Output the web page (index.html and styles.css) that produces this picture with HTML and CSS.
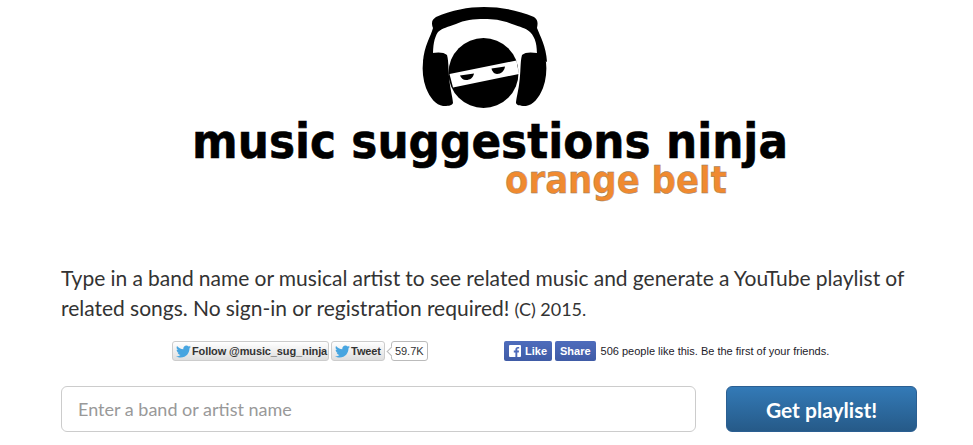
FILE: index.html
```html
<!DOCTYPE html>
<html lang="en">
<head>
    <meta charset="UTF-8">
    <meta name="viewport" content="width=device-width, initial-scale=1.0">
    <title>Music Suggestions Ninja</title>
    <link rel="stylesheet" href="styles.css">
</head>

<body>
    <main class="container">
        <svg class="logo" viewBox="89 0 800 205" width="800" height="205" role="img" aria-label="Music Suggestions Ninja, orange belt">
            <g transform="translate(400 0)">
                <!-- headband -->
                <path d="M23 62 C24 46 31 36 33 28 C31 22 32 20 36 17 C52 10 68 7 84 7 C100 7 118 10 134 17 C138 20 138 23 137 28 C140 36 146 46 147 62 L137 56 C137 46 136 38 130 32 C126 28 120 27 112 24 C102 20 94 19 84 19 C74 19 64 20 56 24 C48 27 42 28 38 32 C34 38 33 46 33 56 Z" fill="#000"/>
                <!-- ear cups -->
                <path d="M32 53 C38 52 44 52 47 55 C49 62 48 72 50 85 C51 92 53 100 53 103 C52 106 47 106 43 106 C36 105 30 98 26 88 C23 80 22 70 23 62 C24 56 27 53 32 53 Z" fill="#000"/>
                <path d="M137 53 C131 52 125 52 122 55 C120 62 121 72 119 85 C118 92 116 100 116 103 C117 106 122 106 126 106 C133 105 139 98 143 88 C146 80 147 70 146 62 C145 56 142 53 137 53 Z" fill="#000"/>
                <!-- head -->
                <circle cx="83.5" cy="73" r="35" fill="#000"/>
                <path d="M49.5 74 L116.5 60.5 L119 74 L53 87.5 Z" fill="#fff"/>
                <path d="M60 75.5 L74 73.5 C73 78 70 80 66 80 C63 80 61 78 60 75.5 Z" fill="#000"/>
                <path d="M91.5 68.5 L105 66.5 C104.5 71 101 74 97 74 C94 74 92 71 91.5 68.5 Z" fill="#000"/>
            </g>
            <text class="logo-name" x="192" y="158" textLength="596" lengthAdjust="spacingAndGlyphs">music suggestions ninja</text>
            <text class="logo-belt" x="505" y="193" textLength="222" lengthAdjust="spacingAndGlyphs">orange belt</text>
        </svg>

        <p class="intro">Type in a band name or musical artist to see related music and generate a YouTube playlist of related songs. No sign-in or registration required! <small>(C) 2015.</small></p>

        <div class="social">
            <div class="twitter">
                <a class="tw-btn" href="#">
                    <svg class="bird" viewBox="0 0 24 24"><path d="M23.954 4.569c-.885.389-1.83.654-2.825.775 1.014-.611 1.794-1.574 2.163-2.723-.951.555-2.005.959-3.127 1.184-.896-.959-2.173-1.559-3.591-1.559-2.717 0-4.92 2.203-4.92 4.917 0 .39.045.765.127 1.124C7.691 8.094 4.066 6.13 1.64 3.161c-.427.722-.666 1.561-.666 2.475 0 1.71.87 3.213 2.188 4.096-.807-.026-1.566-.248-2.228-.616v.061c0 2.385 1.693 4.374 3.946 4.827-.413.111-.849.171-1.296.171-.314 0-.615-.03-.916-.086.631 1.953 2.445 3.377 4.604 3.417-1.68 1.319-3.809 2.105-6.102 2.105-.39 0-.779-.023-1.17-.067 2.189 1.394 4.768 2.209 7.557 2.209 9.054 0 13.999-7.496 13.999-13.986 0-.209 0-.42-.015-.63.961-.689 1.8-1.56 2.46-2.548l-.047-.02z"/></svg>
                    Follow @music_sug_ninja
                </a>
                <a class="tw-btn" href="#">
                    <svg class="bird" viewBox="0 0 24 24"><path d="M23.954 4.569c-.885.389-1.83.654-2.825.775 1.014-.611 1.794-1.574 2.163-2.723-.951.555-2.005.959-3.127 1.184-.896-.959-2.173-1.559-3.591-1.559-2.717 0-4.92 2.203-4.92 4.917 0 .39.045.765.127 1.124C7.691 8.094 4.066 6.13 1.64 3.161c-.427.722-.666 1.561-.666 2.475 0 1.71.87 3.213 2.188 4.096-.807-.026-1.566-.248-2.228-.616v.061c0 2.385 1.693 4.374 3.946 4.827-.413.111-.849.171-1.296.171-.314 0-.615-.03-.916-.086.631 1.953 2.445 3.377 4.604 3.417-1.68 1.319-3.809 2.105-6.102 2.105-.39 0-.779-.023-1.17-.067 2.189 1.394 4.768 2.209 7.557 2.209 9.054 0 13.999-7.496 13.999-13.986 0-.209 0-.42-.015-.63.961-.689 1.8-1.56 2.46-2.548l-.047-.02z"/></svg>
                    Tweet
                </a>
                <span class="tw-count">59.7K</span>
            </div>
            <div class="facebook">
                <a class="fb-btn" href="#">
                    <svg class="fb-icon" viewBox="0 0 12 12"><rect width="12" height="12" rx="1" fill="#fff"/><path d="M8.3 12V7.4h1.5l.2-1.8H8.3V4.5c0-.5.2-.9.9-.9h1V2c-.2 0-.8-.1-1.4-.1-1.4 0-2.4.9-2.4 2.4v1.3H4.8v1.8h1.6V12z" fill="#4c69ba"/></svg>
                    Like
                </a>
                <a class="fb-btn" href="#">Share</a>
                <span class="fb-text">506 people like this. Be the first of your friends.</span>
            </div>
        </div>

        <form class="search">
            <input class="search-input" type="text" placeholder="Enter a band or artist name">
            <button class="search-btn" type="submit">Get playlist!</button>
        </form>
    </main>
</body>
</html>
```

FILE: styles.css
```css
/* General Styles */
* {
    margin: 0;
    padding: 0;
    box-sizing: border-box;
}

html, body {
    height: 100%;
    background: #fff;
    color: #333;
    font-family: 'Lato', Arial, sans-serif;
    overflow: hidden;
}

.container {
    width: 856px;
    margin-left: 61px;
}

/* Logo */
.logo {
    display: block;
    margin: 0 auto;
}

.logo-name {
    font-family: 'DejaVu Sans', sans-serif;
    font-weight: bold;
    font-size: 48px;
    fill: #000;
    stroke: #000;
    stroke-width: 0.6px;
}

.logo-belt {
    font-family: 'DejaVu Sans', sans-serif;
    font-weight: bold;
    font-size: 38px;
    fill: #f08a30;
    stroke: #8a7a6a;
    stroke-width: 0.4px;
}

/* Intro */
.intro {
    margin-top: 58px;
    font-size: 21px;
    line-height: 30px;
    word-spacing: -0.2px;
}

.intro small {
    font-size: 18px;
}

/* Social buttons */
.social {
    display: flex;
    margin-top: 17px;
    padding-left: 111px;
    height: 20px;
}

.twitter {
    display: flex;
    width: 332px;
}

.tw-btn {
    display: flex;
    align-items: center;
    gap: 1px;
    height: 20px;
    margin-right: 2px;
    padding: 0 1px 0 3px;
    border: 1px solid #ccc;
    border-radius: 3px;
    background: linear-gradient(#fff, #dedede);
    color: #333;
    font: bold 11px 'Liberation Sans', Arial, sans-serif;
    letter-spacing: -0.12px;
    text-decoration: none;
    white-space: nowrap;
}

.tw-btn + .tw-btn {
    padding-right: 3px;
}

.bird {
    width: 15px;
    height: 15px;
    fill: #47a5e0;
}

.tw-count {
    position: relative;
    height: 20px;
    margin-left: 4px;
    padding: 0 3px;
    border: 1px solid #bbb;
    border-radius: 3px;
    background: #fff;
    color: #333;
    font: 11px/18px 'Liberation Sans', Arial, sans-serif;
}

.tw-count::before {
    content: "";
    position: absolute;
    left: -4px;
    top: 6px;
    width: 6px;
    height: 6px;
    border-left: 1px solid #bbb;
    border-bottom: 1px solid #bbb;
    background: #fff;
    transform: rotate(45deg);
}

.facebook {
    display: flex;
    align-items: center;
}

.fb-btn {
    display: flex;
    align-items: center;
    gap: 4px;
    height: 20px;
    margin-right: 3px;
    padding: 0 5px;
    border-radius: 2px;
    background: linear-gradient(#4e6cbc, #3f5ba6);
    color: #fff;
    font: bold 11px 'Liberation Sans', Arial, sans-serif;
    text-decoration: none;
}

.fb-text {
    margin-left: 2px;
    color: #1d2129;
    font: 11px 'Liberation Sans', Arial, sans-serif;
    white-space: nowrap;
}

.fb-icon {
    width: 12px;
    height: 12px;
}

/* Search form */
.search {
    display: flex;
    justify-content: space-between;
    margin-top: 25px;
}

.search-input {
    width: 635px;
    height: 46px;
    padding: 0 16px;
    border: 1px solid #ccc;
    border-radius: 6px;
    font-family: 'Lato', Arial, sans-serif;
    font-size: 18px;
    color: #333;
}

.search-input::placeholder {
    color: #999;
}

.search-btn {
    width: 191px;
    height: 46px;
    border: 1px solid #2b5f92;
    border-radius: 6px;
    background: linear-gradient(#337ab7, #265a88);
    color: #fff;
    font-family: 'Lato', Arial, sans-serif;
    font-size: 21px;
    font-weight: bold;
}
```
